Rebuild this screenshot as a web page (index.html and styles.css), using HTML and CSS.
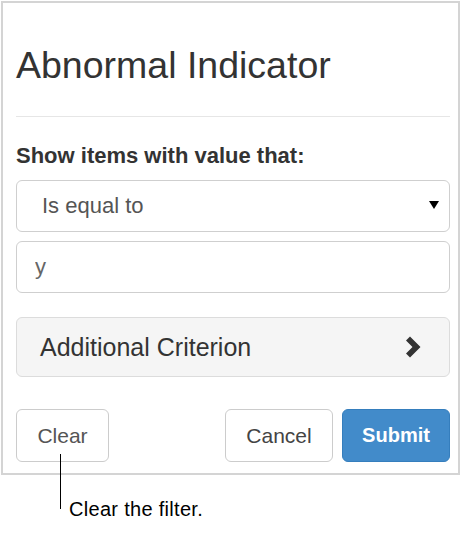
FILE: index.html
```html
<!DOCTYPE html>
<html>
<head>
<meta charset="utf-8">
<link rel="stylesheet" href="styles.css">
</head>
<body>
<div class="panel">
  <h3 class="title">Abnormal Indicator</h3>
  <hr class="rule">
  <div class="label">Show items with value that:</div>
  <div class="select">
    <span class="select-text">Is equal to</span>
    <svg class="caret" width="10" height="8" viewBox="0 0 10 8"><polygon points="0,0 10,0 5,8" fill="#000"/></svg>
  </div>
  <input class="field" type="text" value="y">
  <div class="criterion">
    <span>Additional Criterion</span>
    <svg class="chevron" width="18" height="22" viewBox="0 0 18 22"><polygon points="1,4.5 5,0.5 15.5,11 5,21.5 1,17.5 7.5,11" fill="#333"/></svg>
  </div>
  <div class="actions">
    <button class="btn">Clear</button>
    <div class="spacer"></div>
    <button class="btn btn-cancel">Cancel</button>
    <button class="btn btn-primary">Submit</button>
  </div>
</div>
<div class="callout">
  <div class="callout-line"></div>
  <div class="callout-text">Clear the filter.</div>
</div>
</body>
</html>
```
FILE: styles.css
```css
html, body {
  margin: 0;
  padding: 0;
  background: #fff;
}
body {
  font-family: "Liberation Sans", Arial, sans-serif;
  color: #333;
}
.panel {
  box-sizing: border-box;
  width: 459px;
  margin: 1px 0 0 1px;
  border: 2px solid #d4d4d4;
  padding: 42px 8px 11px 13px;
  display: flex;
  flex-direction: column;
}
.title {
  margin: 0;
  font-size: 37.5px;
  line-height: 40px;
  font-weight: normal;
  color: #333;
}
.rule {
  margin: 31px 0 0 0;
  border: 0;
  border-top: 1px solid #e6e6e6;
  height: 0;
}
.label {
  margin-top: 27px;
  font-size: 22px;
  line-height: 24px;
  font-weight: bold;
  color: #333;
}
.select {
  box-sizing: border-box;
  margin-top: 12px;
  height: 52px;
  border: 1px solid #cfcfcf;
  border-radius: 6px;
  display: flex;
  align-items: center;
  padding: 0 10px 0 25px;
  font-size: 22px;
  color: #555;
}
.select-text {
  flex: 1;
}
.caret {
  display: block;
  margin-top: -2px;
}
.field {
  box-sizing: border-box;
  margin: 9px 0 0 0;
  height: 52px;
  width: 100%;
  border: 1px solid #cfcfcf;
  border-radius: 6px;
  padding: 0 18px;
  font-family: "Liberation Sans", Arial, sans-serif;
  font-size: 22px;
  color: #666;
  outline: none;
  background: #fff;
}
.criterion {
  box-sizing: border-box;
  margin-top: 24px;
  height: 60px;
  border: 1px solid #dcdcdc;
  border-radius: 6px;
  background: #f5f5f5;
  display: flex;
  align-items: center;
  justify-content: space-between;
  padding: 0 26px 0 23px;
  font-size: 25px;
  color: #333;
}
.chevron {
  display: block;
}
.actions {
  margin-top: 32px;
  display: flex;
  gap: 9px;
}
.spacer {
  flex: 1;
}
.btn {
  box-sizing: border-box;
  height: 53px;
  border: 1px solid #cccccc;
  border-radius: 6px;
  background: #fff;
  font-family: "Liberation Sans", Arial, sans-serif;
  font-size: 21px;
  color: #555;
  padding: 0;
  width: 93px;
}
.btn-cancel {
  width: 108px;
  color: #444;
}
.btn-primary {
  width: 108px;
  background: #428bca;
  border-color: #357ebd;
  color: #fff;
  font-weight: bold;
  font-size: 20px;
}
.callout {
  position: relative;
  margin-top: 23px;
  padding-left: 69px;
}
.callout-line {
  position: absolute;
  left: 60px;
  top: -44px;
  width: 1px;
  height: 55px;
  background: #000;
}
.callout-text {
  font-size: 20px;
  line-height: 22px;
  letter-spacing: 0.3px;
  color: #000;
}
```
